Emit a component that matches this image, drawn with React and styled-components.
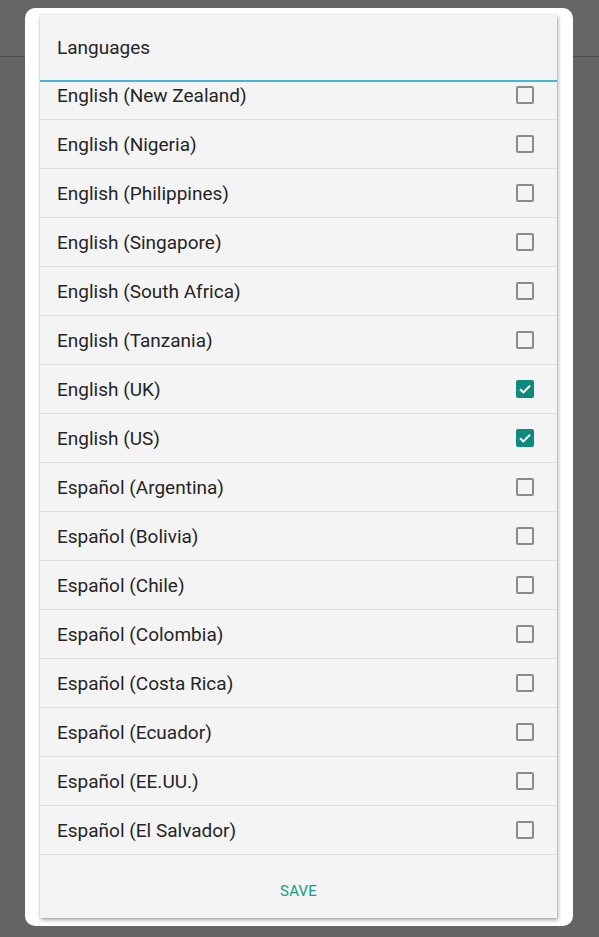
import React from 'react';
import styled, { createGlobalStyle } from 'styled-components';

const languages = [
  { name: 'English (New Zealand)', checked: false },
  { name: 'English (Nigeria)', checked: false },
  { name: 'English (Philippines)', checked: false },
  { name: 'English (Singapore)', checked: false },
  { name: 'English (South Africa)', checked: false },
  { name: 'English (Tanzania)', checked: false },
  { name: 'English (UK)', checked: true },
  { name: 'English (US)', checked: true },
  { name: 'Español (Argentina)', checked: false },
  { name: 'Español (Bolivia)', checked: false },
  { name: 'Español (Chile)', checked: false },
  { name: 'Español (Colombia)', checked: false },
  { name: 'Español (Costa Rica)', checked: false },
  { name: 'Español (Ecuador)', checked: false },
  { name: 'Español (EE.UU.)', checked: false },
  { name: 'Español (El Salvador)', checked: false },
];

export default function App() {
  return (
    <Page>
      <GlobalStyle />
      <AppBar />
      <Card>
        <Panel>
          <Header>Languages</Header>
          <List>
            {languages.map((lang) => (
              <Row key={lang.name}>
                <Label>{lang.name}</Label>
                <Box checked={lang.checked}>
                  {lang.checked && (
                    <svg width="16" height="16" viewBox="0 0 16 16">
                      <path
                        d="M3 8.2 L6.4 11.4 L13 4.8"
                        fill="none"
                        stroke="#fff"
                        strokeWidth="2"
                      />
                    </svg>
                  )}
                </Box>
              </Row>
            ))}
          </List>
          <Footer>
            <SaveButton>SAVE</SaveButton>
          </Footer>
        </Panel>
      </Card>
    </Page>
  );
}

const GlobalStyle = createGlobalStyle`
  body {
    margin: 0;
    font-family: Roboto, "Noto Sans", sans-serif;
  }
`;

const Page = styled.div`
  position: relative;
  width: 599px;
  height: 937px;
  background: #646464;
  overflow: hidden;
`;

const AppBar = styled.div`
  height: 56px;
  background: #666666;
  border-bottom: 1px solid #4c4c4c;
`;

const Card = styled.div`
  position: absolute;
  left: 25px;
  top: 8px;
  width: 548px;
  height: 918px;
  box-sizing: border-box;
  padding: 7px 16px 8px 15px;
  background: #ffffff;
  border-radius: 10px;
`;

const Panel = styled.div`
  display: flex;
  flex-direction: column;
  height: 100%;
  background: #f4f4f4;
  box-shadow: 1px 2px 4px rgba(0, 0, 0, 0.35), 0 0 1px rgba(0, 0, 0, 0.25);
`;

const Header = styled.div`
  height: 67px;
  flex-shrink: 0;
  box-sizing: border-box;
  display: flex;
  align-items: center;
  padding: 0 0 0 17px;
  font-size: 19px;
  color: #252525;
  border-bottom: 2px solid #45b6d8;
`;

const List = styled.div`
  flex: 1;
  overflow: hidden;
  & > div:first-child {
    margin-top: -11px;
  }
`;

const Row = styled.div`
  height: 48px;
  display: flex;
  align-items: center;
  justify-content: space-between;
  padding: 0 23px 0 17px;
  border-bottom: 1px solid #dcdcdc;
`;

const Label = styled.span`
  font-size: 19px;
  color: #252525;
`;

const Box = styled.div`
  width: 18px;
  height: 18px;
  box-sizing: border-box;
  border-radius: 2px;
  display: flex;
  align-items: center;
  justify-content: center;
  border: ${(p) => (p.checked ? 'none' : '2px solid #8a8a8a')};
  background: ${(p) => (p.checked ? '#0e8a7c' : 'transparent')};
`;

const Footer = styled.div`
  height: 63px;
  flex-shrink: 0;
  display: flex;
  align-items: center;
  justify-content: center;
  padding-top: 9px;
  box-sizing: border-box;
`;

const SaveButton = styled.button`
  border: none;
  background: transparent;
  font-family: Roboto, "Noto Sans", sans-serif;
  font-size: 15px;
  color: #159b86;
  letter-spacing: 0.2px;
  padding: 0;
`;
